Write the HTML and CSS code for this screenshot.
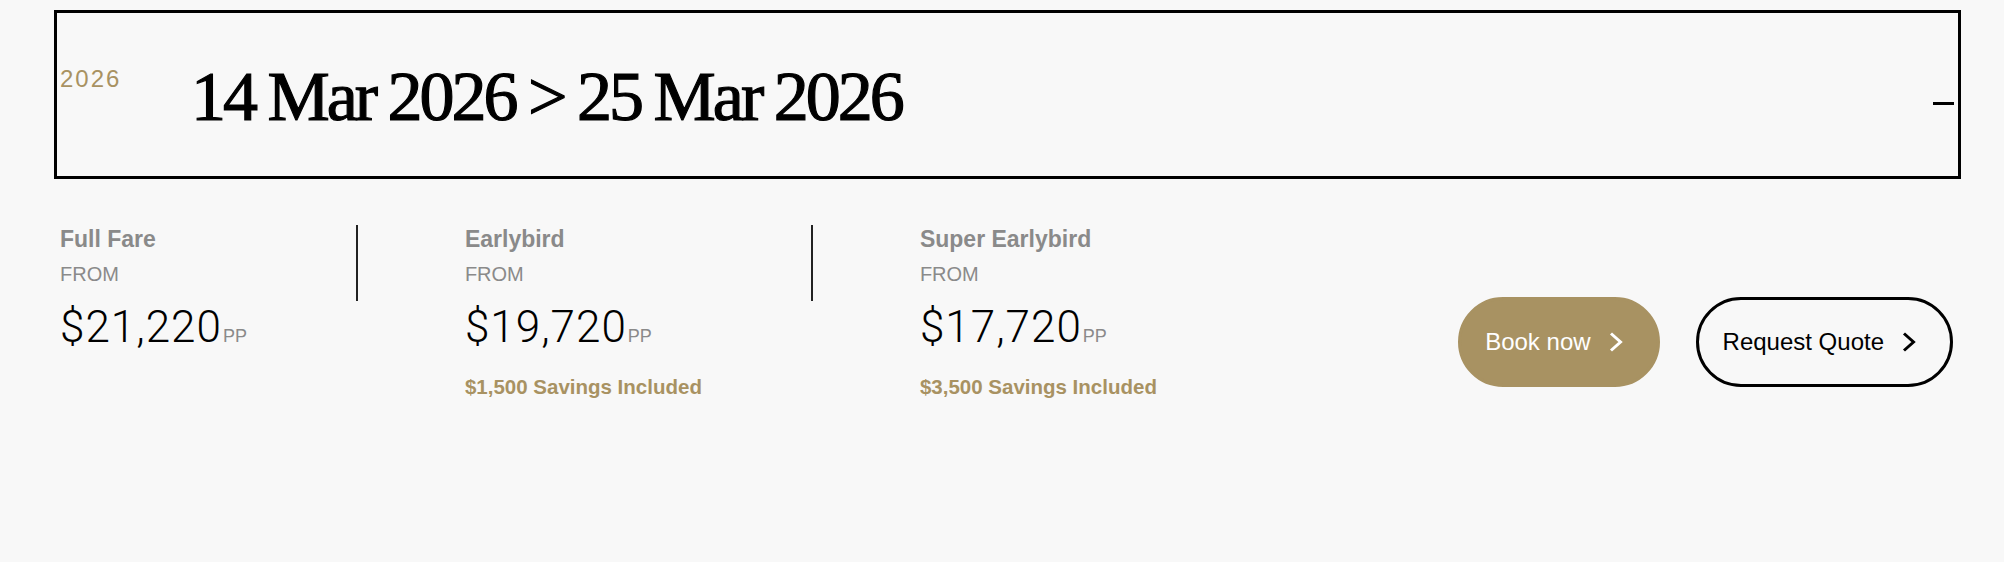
FILE: index.html
```html
<!DOCTYPE html>
<html lang="en">
<head>
<meta charset="utf-8">
<title>Departure</title>
<link rel="stylesheet" href="styles.css">
</head>
<body>
<div class="page">
  <section class="departure">
    <div class="departure-head">
      <span class="year">2026</span>
      <h2 class="dates">14 Mar 2026 &gt; 25 Mar 2026</h2>
      <span class="toggle" aria-label="Collapse"></span>
    </div>
    <div class="fares">
      <div class="fare">
        <div class="fare-name">Full Fare</div>
        <div class="fare-from">FROM</div>
        <div class="fare-price">$21,220<span class="pp">PP</span></div>
      </div>
      <span class="sep"></span>
      <div class="fare">
        <div class="fare-name">Earlybird</div>
        <div class="fare-from">FROM</div>
        <div class="fare-price">$19,720<span class="pp">PP</span></div>
        <div class="fare-saving">$1,500 Savings Included</div>
      </div>
      <span class="sep"></span>
      <div class="fare">
        <div class="fare-name">Super Earlybird</div>
        <div class="fare-from">FROM</div>
        <div class="fare-price">$17,720<span class="pp">PP</span></div>
        <div class="fare-saving">$3,500 Savings Included</div>
      </div>
      <div class="actions">
        <a class="btn btn-gold" href="#">Book now<svg class="chev" width="14" height="20" viewBox="0 0 14 20"><path d="M2 1.5 L11.5 10 L2 18.5" fill="none" stroke="currentColor" stroke-width="3"/></svg></a>
        <a class="btn btn-outline" href="#">Request Quote<svg class="chev" width="14" height="20" viewBox="0 0 14 20"><path d="M2 1.5 L11.5 10 L2 18.5" fill="none" stroke="currentColor" stroke-width="3"/></svg></a>
      </div>
    </div>
  </section>
</div>
</body>
</html>
```

FILE: styles.css
```css
html, body {
  margin: 0;
  background: #f8f8f8;
}

body {
  font-family: "Liberation Sans", Arial, sans-serif;
  color: #000;
}

.page {
  padding: 10px 43px 0 54px;
}

.departure-head {
  display: flex;
  align-items: flex-start;
  height: 169px;
  box-sizing: border-box;
  border: 3px solid #000;
  padding: 0 4px 0 3px;
}

.year {
  width: 131px;
  flex: none;
  margin-top: 54px;
  font-size: 24px;
  line-height: 24px;
  letter-spacing: 2px;
  color: #a89262;
}

.dates {
  margin: 49px 0 0;
  font-family: "Liberation Serif", "Times New Roman", serif;
  font-weight: 400;
  font-size: 70px;
  line-height: 70px;
  letter-spacing: -3px;
  word-spacing: -2px;
  -webkit-text-stroke: 1.2px #000;
  color: #000;
}

.toggle {
  margin-left: auto;
  margin-top: 89px;
  width: 21px;
  height: 3px;
  background: #000;
}

.fares {
  display: flex;
  align-items: flex-start;
  padding: 46px 8px 0 6px;
}

.fare {
  padding: 0 109px 0 107px;
}

.fare:first-child {
  padding-left: 0;
}

.sep {
  flex: none;
  width: 2px;
  height: 76px;
  background: #222;
}

.fare-name {
  font-weight: 700;
  font-size: 23px;
  line-height: 28px;
  color: #8a8a8a;
  margin-bottom: 9px;
  white-space: nowrap;
}

.fare-from {
  font-size: 20px;
  line-height: 24px;
  color: #8a8a8a;
}

.fare-price {
  margin-top: 17px;
  font-family: Roboto, "Liberation Sans", sans-serif;
  font-weight: 300;
  font-size: 44px;
  line-height: 48px;
  letter-spacing: 1px;
  color: #000;
  white-space: nowrap;
}

.pp {
  margin-left: 1px;
  font-family: "Liberation Sans", Arial, sans-serif;
  font-weight: 400;
  font-size: 18px;
  line-height: 1;
  letter-spacing: 0;
  color: #8a8a8a;
}

.fare-saving {
  margin-top: 24px;
  font-weight: 700;
  font-size: 20.5px;
  line-height: 24px;
  color: #a89262;
  white-space: nowrap;
}

.actions {
  margin-left: auto;
  margin-top: 72px;
  display: flex;
  gap: 36px;
}

.btn {
  display: inline-flex;
  align-items: center;
  height: 90px;
  box-sizing: border-box;
  border: 3px solid #000;
  border-radius: 45px;
  padding: 0 34px 0 24px;
  font-size: 24px;
  text-decoration: none;
  white-space: nowrap;
}

.chev {
  margin-left: 18px;
  display: block;
}

.btn-gold {
  background: #a89262;
  border-color: #a89262;
  color: #fff;
}

.btn-outline {
  background: transparent;
  border-color: #000;
  color: #000;
}
```
